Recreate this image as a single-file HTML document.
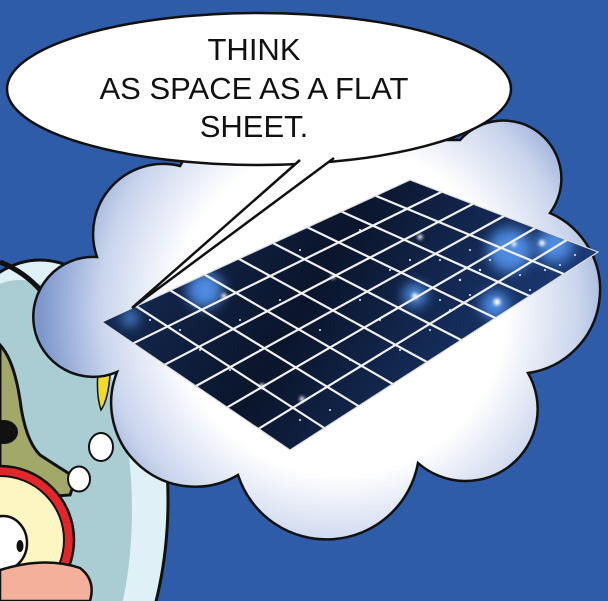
<!DOCTYPE html>
<html><head><meta charset="utf-8"><style>
html,body{margin:0;padding:0;background:#2e5ca8;width:608px;height:601px;overflow:hidden;}
svg{display:block}
</style></head><body>
<svg width="608" height="601" viewBox="0 0 608 601" xmlns="http://www.w3.org/2000/svg">
<defs>
<radialGradient id="cg" gradientUnits="userSpaceOnUse" cx="340" cy="310" r="300">
<stop offset="0" stop-color="#ffffff"/><stop offset="0.55" stop-color="#ffffff"/><stop offset="0.8" stop-color="#c9d4ec"/><stop offset="1" stop-color="#7d96cc"/>
</radialGradient>
<linearGradient id="sg" x1="0" y1="0" x2="1" y2="0.3">
<stop offset="0" stop-color="#173060"/><stop offset="0.5" stop-color="#0b152b"/><stop offset="1" stop-color="#1b3b78"/>
</linearGradient>
<clipPath id="sheet"><polygon points="102,322 410,180 598,252 290,450"/></clipPath>
<filter id="bl" x="-1" y="-1" width="3" height="3"><feGaussianBlur stdDeviation="6"/></filter>
<filter id="bl2" x="-1" y="-1" width="3" height="3"><feGaussianBlur stdDeviation="1.5"/></filter>
</defs>
<rect width="608" height="601" fill="#2e5ca8"/>
<ellipse cx="40" cy="500" rx="128" ry="240" fill="#dff1f6" stroke="#111" stroke-width="3"/>
<ellipse cx="20" cy="510" rx="112" ry="230" fill="#a9cdd3"/>
<path d="M0,262 Q25,272 42,292" stroke="#111" stroke-width="5" fill="none"/>
<path d="M0,345 Q14,360 20,400 Q25,440 40,455 Q60,468 76,478 L70,495 L0,500 Z" fill="#a1a86a" stroke="#111" stroke-width="3"/>
<ellipse cx="4" cy="432" rx="14" ry="12" fill="#111"/>
<circle cx="0" cy="540" r="74" fill="#e3262a" stroke="#111" stroke-width="2.5"/>
<circle cx="0" cy="540" r="64" fill="#fdf6c3" stroke="#111" stroke-width="2"/>
<ellipse cx="3" cy="543" rx="24" ry="27" fill="#fff" stroke="#111" stroke-width="2.5"/>
<ellipse cx="20" cy="546" rx="3.5" ry="6" fill="#111"/>
<path d="M0,570 Q45,556 80,568 Q96,580 90,601 L0,601 Z" fill="#f5b09c" stroke="#111" stroke-width="2.5"/>
<ellipse cx="101" cy="447" rx="12" ry="14" fill="#fff" stroke="#111" stroke-width="2"/>
<ellipse cx="79" cy="479" rx="11" ry="12.5" fill="#fff" stroke="#111" stroke-width="2"/>
<path d="M98,372 Q96,395 101,410 Q108,400 110,375 Z" fill="#f2da2c" stroke="#111" stroke-width="1.5"/>
<path d="M97,257 A70 70 0 0 1 180,166 A80 80 0 0 1 300,140 L460,140 A58 58 0 0 1 550,213 A84 84 0 0 1 528,373 A72 72 0 0 1 418,463 A93 93 0 0 1 238,475 A84 84 0 0 1 117,372 A60 60 0 1 1 97,257 Z" fill="url(#cg)" stroke="#111" stroke-width="2.5"/>
<polygon points="102,322 410,180 598,252 290,450" fill="url(#sg)"/>
<g clip-path="url(#sheet)">
<g filter="url(#bl)" fill="#4d8ae0">
<circle cx="205" cy="290" r="18"/><circle cx="510" cy="250" r="22"/><circle cx="555" cy="245" r="18"/><circle cx="415" cy="295" r="12"/><circle cx="495" cy="305" r="14"/><circle cx="130" cy="318" r="8"/>
</g>
<g fill="#fff" filter="url(#bl2)">
<circle cx="415" cy="296" r="3"/><circle cx="497" cy="302" r="3.5"/><circle cx="420" cy="237" r="2.5"/><circle cx="224" cy="296" r="2.5"/><circle cx="262" cy="386" r="2.5"/><circle cx="302" cy="399" r="2.5"/><circle cx="542" cy="243" r="3"/><circle cx="514" cy="244" r="2.5"/><circle cx="333" cy="277" r="2"/>
</g>
<g fill="#e8eeff">
<circle cx="150" cy="320" r="1"/><circle cx="180" cy="330" r="1"/><circle cx="240" cy="320" r="1"/><circle cx="280" cy="300" r="1"/><circle cx="320" cy="330" r="1"/><circle cx="350" cy="360" r="1"/><circle cx="380" cy="320" r="1"/><circle cx="440" cy="260" r="1"/><circle cx="460" cy="280" r="1.2"/><circle cx="470" cy="250" r="1"/><circle cx="480" cy="270" r="1.2"/><circle cx="490" cy="260" r="1"/><circle cx="520" cy="275" r="1"/><circle cx="530" cy="290" r="1"/><circle cx="545" cy="270" r="1"/><circle cx="560" cy="265" r="1"/><circle cx="575" cy="255" r="1"/><circle cx="400" cy="350" r="1"/><circle cx="430" cy="330" r="1"/><circle cx="300" cy="420" r="1"/><circle cx="330" cy="410" r="1"/><circle cx="360" cy="300" r="1"/><circle cx="390" cy="270" r="1"/><circle cx="360" cy="230" r="1"/><circle cx="300" cy="250" r="1"/><circle cx="260" cy="350" r="1"/><circle cx="450" cy="310" r="1"/><circle cx="505" cy="285" r="1"/><circle cx="470" cy="295" r="1"/><circle cx="440" cy="300" r="1"/><circle cx="410" cy="260" r="1"/><circle cx="230" cy="370" r="1"/><circle cx="200" cy="350" r="1"/></g>
</g>
<g stroke="#f2f2f2" stroke-width="2.2" fill="none">
<line x1="136.2" y1="306.2" x2="324.2" y2="428"/><line x1="170.4" y1="290.4" x2="358.4" y2="406"/><line x1="204.7" y1="274.7" x2="392.7" y2="384"/><line x1="238.9" y1="258.9" x2="426.9" y2="362"/><line x1="273.1" y1="243.1" x2="461.1" y2="340"/><line x1="307.3" y1="227.3" x2="495.3" y2="318"/><line x1="341.6" y1="211.6" x2="529.6" y2="296"/><line x1="375.8" y1="195.8" x2="563.8" y2="274"/>
<line x1="133.3" y1="343.3" x2="441.3" y2="192"/><line x1="164.7" y1="364.7" x2="472.7" y2="204"/><line x1="196" y1="386" x2="504" y2="216"/><line x1="227.3" y1="407.3" x2="535.3" y2="228"/><line x1="258.7" y1="428.7" x2="566.7" y2="240"/>
</g>
<polygon points="102,322 410,180 598,252 290,450" fill="none" stroke="#ddd" stroke-width="1.2"/>
<ellipse cx="259" cy="89" rx="252" ry="76" fill="#fff" stroke="#111" stroke-width="2.5"/>
<path d="M300,160 L132,308 L334,158" fill="#fff" stroke="#111" stroke-width="2.5"/>
<g font-family="'Liberation Sans',sans-serif" font-size="31" fill="#111" text-anchor="middle">
<text x="254" y="60">THINK</text>
<text x="254" y="99">AS SPACE AS A FLAT</text>
<text x="254" y="137">SHEET.</text>
</g>
</svg>
</body></html>
